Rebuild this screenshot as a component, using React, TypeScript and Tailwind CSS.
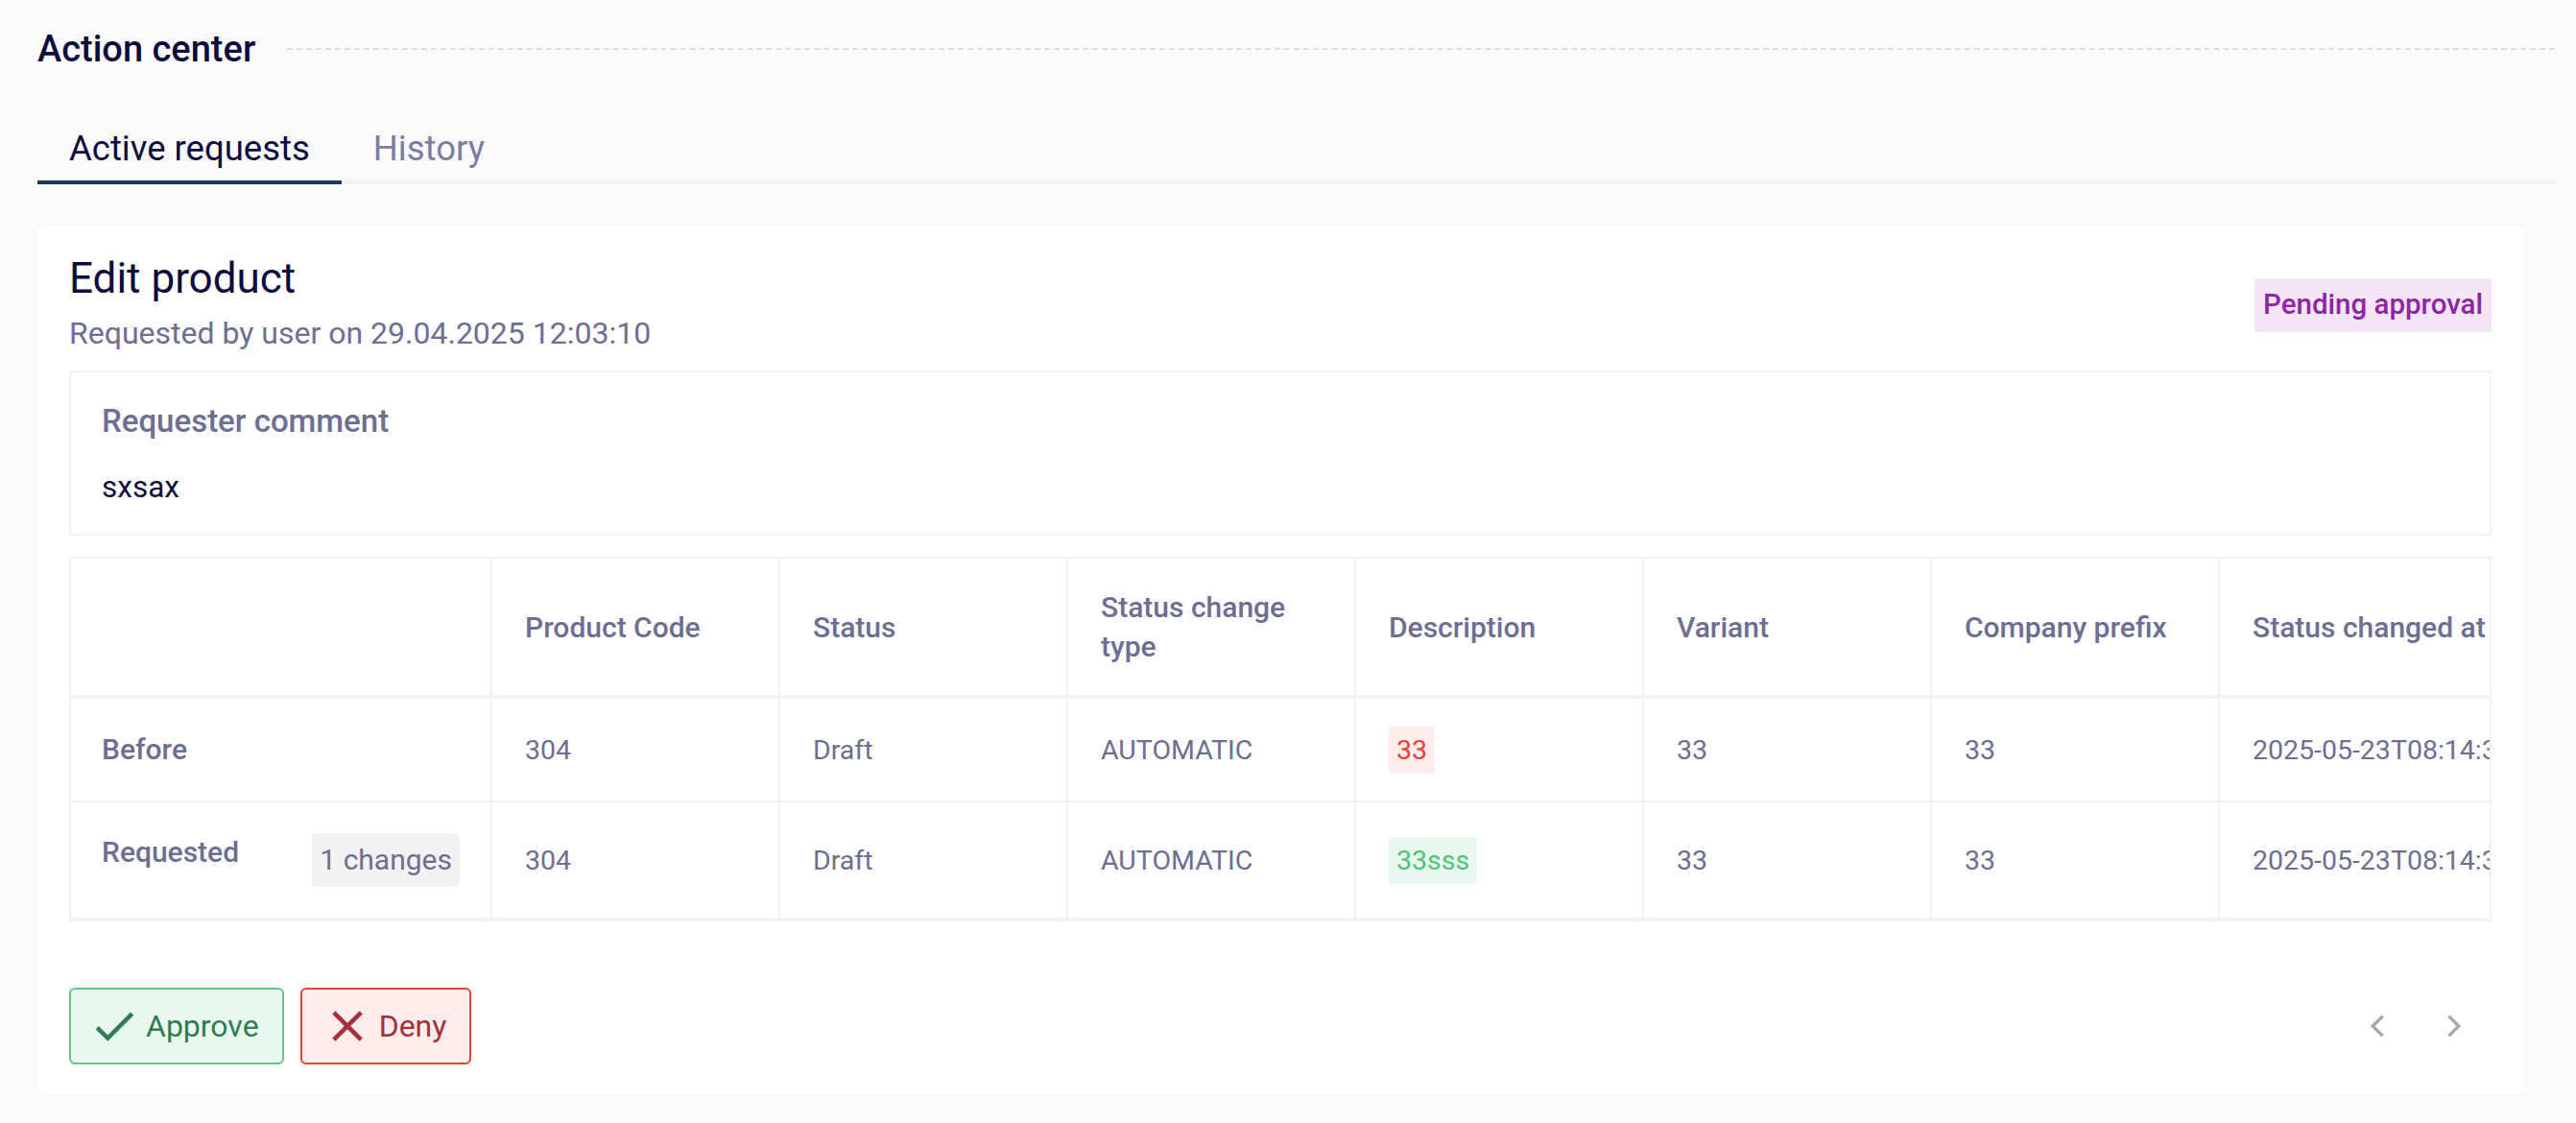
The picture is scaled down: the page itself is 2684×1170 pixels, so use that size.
import React from "react";

const GREY = "text-[#6e6e93]";

function CheckIcon() {
  return (
    <svg width="54" height="54" viewBox="0 0 24 24" className="shrink-0">
      <path d="M9 16.17L4.83 12l-1.42 1.41L9 19 21 7l-1.41-1.41z" fill="#2e7d4f" />
    </svg>
  );
}

function CloseIcon() {
  return (
    <svg width="54" height="54" viewBox="0 0 24 24" className="shrink-0">
      <path
        d="M19 6.41L17.59 5 12 10.59 6.41 5 5 6.41 10.59 12 5 17.59 6.41 19 12 13.41 17.59 19 19 17.59 13.41 12z"
        fill="#a3303b"
      />
    </svg>
  );
}

function ChevronLeft() {
  return (
    <svg width="48" height="48" viewBox="0 0 24 24">
      <path d="M15.41 7.41L14.2 6.2 8.4 12l5.8 5.8 1.21-1.21L10.83 12z" fill="#a9a9a9" />
    </svg>
  );
}

function ChevronRight() {
  return (
    <svg width="48" height="48" viewBox="0 0 24 24">
      <path d="M8.59 7.41L9.8 6.2 15.6 12l-5.8 5.8-1.21-1.21L13.17 12z" fill="#a9a9a9" />
    </svg>
  );
}

type Cell = { text: string; tone?: "red" | "green" };

const headers = [
  "Product Code",
  "Status",
  "Status change type",
  "Description",
  "Variant",
  "Company prefix",
  "Status changed at",
];

const before: Cell[] = [
  { text: "304" },
  { text: "Draft" },
  { text: "AUTOMATIC" },
  { text: "33", tone: "red" },
  { text: "33" },
  { text: "33" },
  { text: "2025-05-23T08:14:33.000Z" },
];

const requested: Cell[] = [
  { text: "304" },
  { text: "Draft" },
  { text: "AUTOMATIC" },
  { text: "33sss", tone: "green" },
  { text: "33" },
  { text: "33" },
  { text: "2025-05-23T08:14:33.000Z" },
];

function DataCell({ cell, last }: { cell: Cell; last: boolean }) {
  const width = last ? "w-[420px] whitespace-nowrap" : "w-[300px]";
  let inner: React.ReactNode = <span>{cell.text}</span>;
  if (cell.tone === "red") {
    inner = (
      <span className="rounded-[2px] bg-[#fdecec] px-[8px] py-[4px] leading-[41px] text-[#e8423a]">
        {cell.text}
      </span>
    );
  } else if (cell.tone === "green") {
    inner = (
      <span className="rounded-[2px] bg-[#e8f8f0] px-[8px] py-[4px] leading-[41px] text-[#4cc475]">
        {cell.text}
      </span>
    );
  }
  return (
    <div
      className={`flex shrink-0 items-center border-r-2 border-[#f2f2f2] px-[34px] text-[28.5px] leading-[41px] ${GREY} ${width}`}
    >
      {inner}
    </div>
  );
}

export default function App() {
  return (
    <div className="min-h-[1170px] w-full bg-[#fafafa] pl-[39px] pr-[22px] pt-[29px] font-[Roboto,sans-serif]">
      {/* Page title */}
      <div className="flex items-center gap-[33px]">
        <div className="text-[38px] font-medium leading-[44px] text-[#0c0c3e]">Action center</div>
        <div className="h-0 flex-1 border-t-2 border-dashed border-[#dcdce6]" />
      </div>

      {/* Tabs */}
      <div className="mt-[48px] flex border-b-4 border-[#f1f1f1]">
        <div className="-mb-[4px] border-b-4 border-[#1b3a5e] px-[33px] pb-[11px] pt-[12px] text-[36.5px] leading-[44px] text-[#0c0c3e]">
          Active requests
        </div>
        <div className="-mb-[4px] border-b-4 border-transparent px-[33px] pb-[11px] pt-[12px] text-[36.5px] leading-[44px] text-[#7c7c9e]">
          History
        </div>
      </div>

      {/* Card */}
      <div className="mr-[33px] mt-[44px] rounded-lg bg-white px-[33px] pb-[31px] pt-[30px]">
        <div className="flex items-center justify-between">
          <div>
            <div className="text-[44px] leading-[48px] text-[#0c0c3e]">Edit product</div>
            <div className={`mt-[11px] text-[32px] leading-[44px] ${GREY}`}>
              Requested by user on 29.04.2025 12:03:10
            </div>
          </div>
          <div className="flex h-[56px] items-center rounded-[2px] bg-[#f3e5f5] px-[9px] text-[29.5px] font-medium text-[#8e24aa]">
            Pending approval
          </div>
        </div>

        {/* Requester comment */}
        <div className="mt-[17px] border-2 border-[#f2f2f2] px-8 pb-[26px] pt-[29px]">
          <div className={`text-[33px] font-medium leading-[44px] ${GREY}`}>Requester comment</div>
          <div className="mt-[25px] text-[31.5px] leading-[44px] text-[#0c0c3e]">sxsax</div>
        </div>

        {/* Table */}
        <div className="mt-[22px] overflow-hidden border-x-2 border-t-2 border-[#f2f2f2]">
          <div className="flex h-[146px] w-max border-b-4 border-[#f2f2f2]">
            <div className="w-[439px] shrink-0 border-r-2 border-[#f2f2f2]" />
            {headers.map((h, i) => (
              <div
                key={h}
                className={`flex shrink-0 items-center border-r-2 border-[#f2f2f2] px-[34px] text-[30px] font-medium leading-[41px] ${GREY} ${
                  i === headers.length - 1 ? "w-[420px] whitespace-nowrap" : "w-[300px]"
                }`}
              >
                {h}
              </div>
            ))}
          </div>
          <div className="flex h-[108px] w-max border-b-2 border-[#f2f2f2]">
            <div
              className={`flex w-[439px] shrink-0 items-center border-r-2 border-[#f2f2f2] px-8 text-[30px] font-medium leading-[40px] ${GREY}`}
            >
              Before
            </div>
            {before.map((c, i) => (
              <DataCell key={i} cell={c} last={i === before.length - 1} />
            ))}
          </div>
          <div className="flex h-[124px] w-max border-b-4 border-[#f2f2f2]">
            <div className="flex w-[439px] shrink-0 items-center border-r-2 border-[#f2f2f2] px-8">
              <div className="flex w-full items-start justify-between">
                <span className={`text-[30px] font-medium leading-[40px] ${GREY}`}>Requested</span>
                <span
                  className={`rounded-[2px] bg-[#f2f2f2] px-[8px] py-[8px] text-[30px] leading-[40px] ${GREY}`}
                >
                  1 changes
                </span>
              </div>
            </div>
            {requested.map((c, i) => (
              <DataCell key={i} cell={c} last={i === requested.length - 1} />
            ))}
          </div>
        </div>

        {/* Footer */}
        <div className="mt-[69px] flex items-center justify-between">
          <div className="flex gap-[17px]">
            <button className="flex h-[80px] items-center gap-[6px] rounded-[6px] border-2 border-[#5cc883] bg-[#e8f8f0] pl-[18px] pr-[24px] text-[32px] text-[#2e7d4f]">
              <CheckIcon />
              <span>Approve</span>
            </button>
            <button className="flex h-[80px] items-center gap-[6px] rounded-[6px] border-2 border-[#e0453a] bg-[#fdeceb] pl-[20px] pr-[24px] text-[32px] text-[#a3303b]">
              <CloseIcon />
              <span>Deny</span>
            </button>
          </div>
          <div className="mr-[15px] flex items-center gap-[32px]">
            <ChevronLeft />
            <ChevronRight />
          </div>
        </div>
      </div>
    </div>
  );
}
